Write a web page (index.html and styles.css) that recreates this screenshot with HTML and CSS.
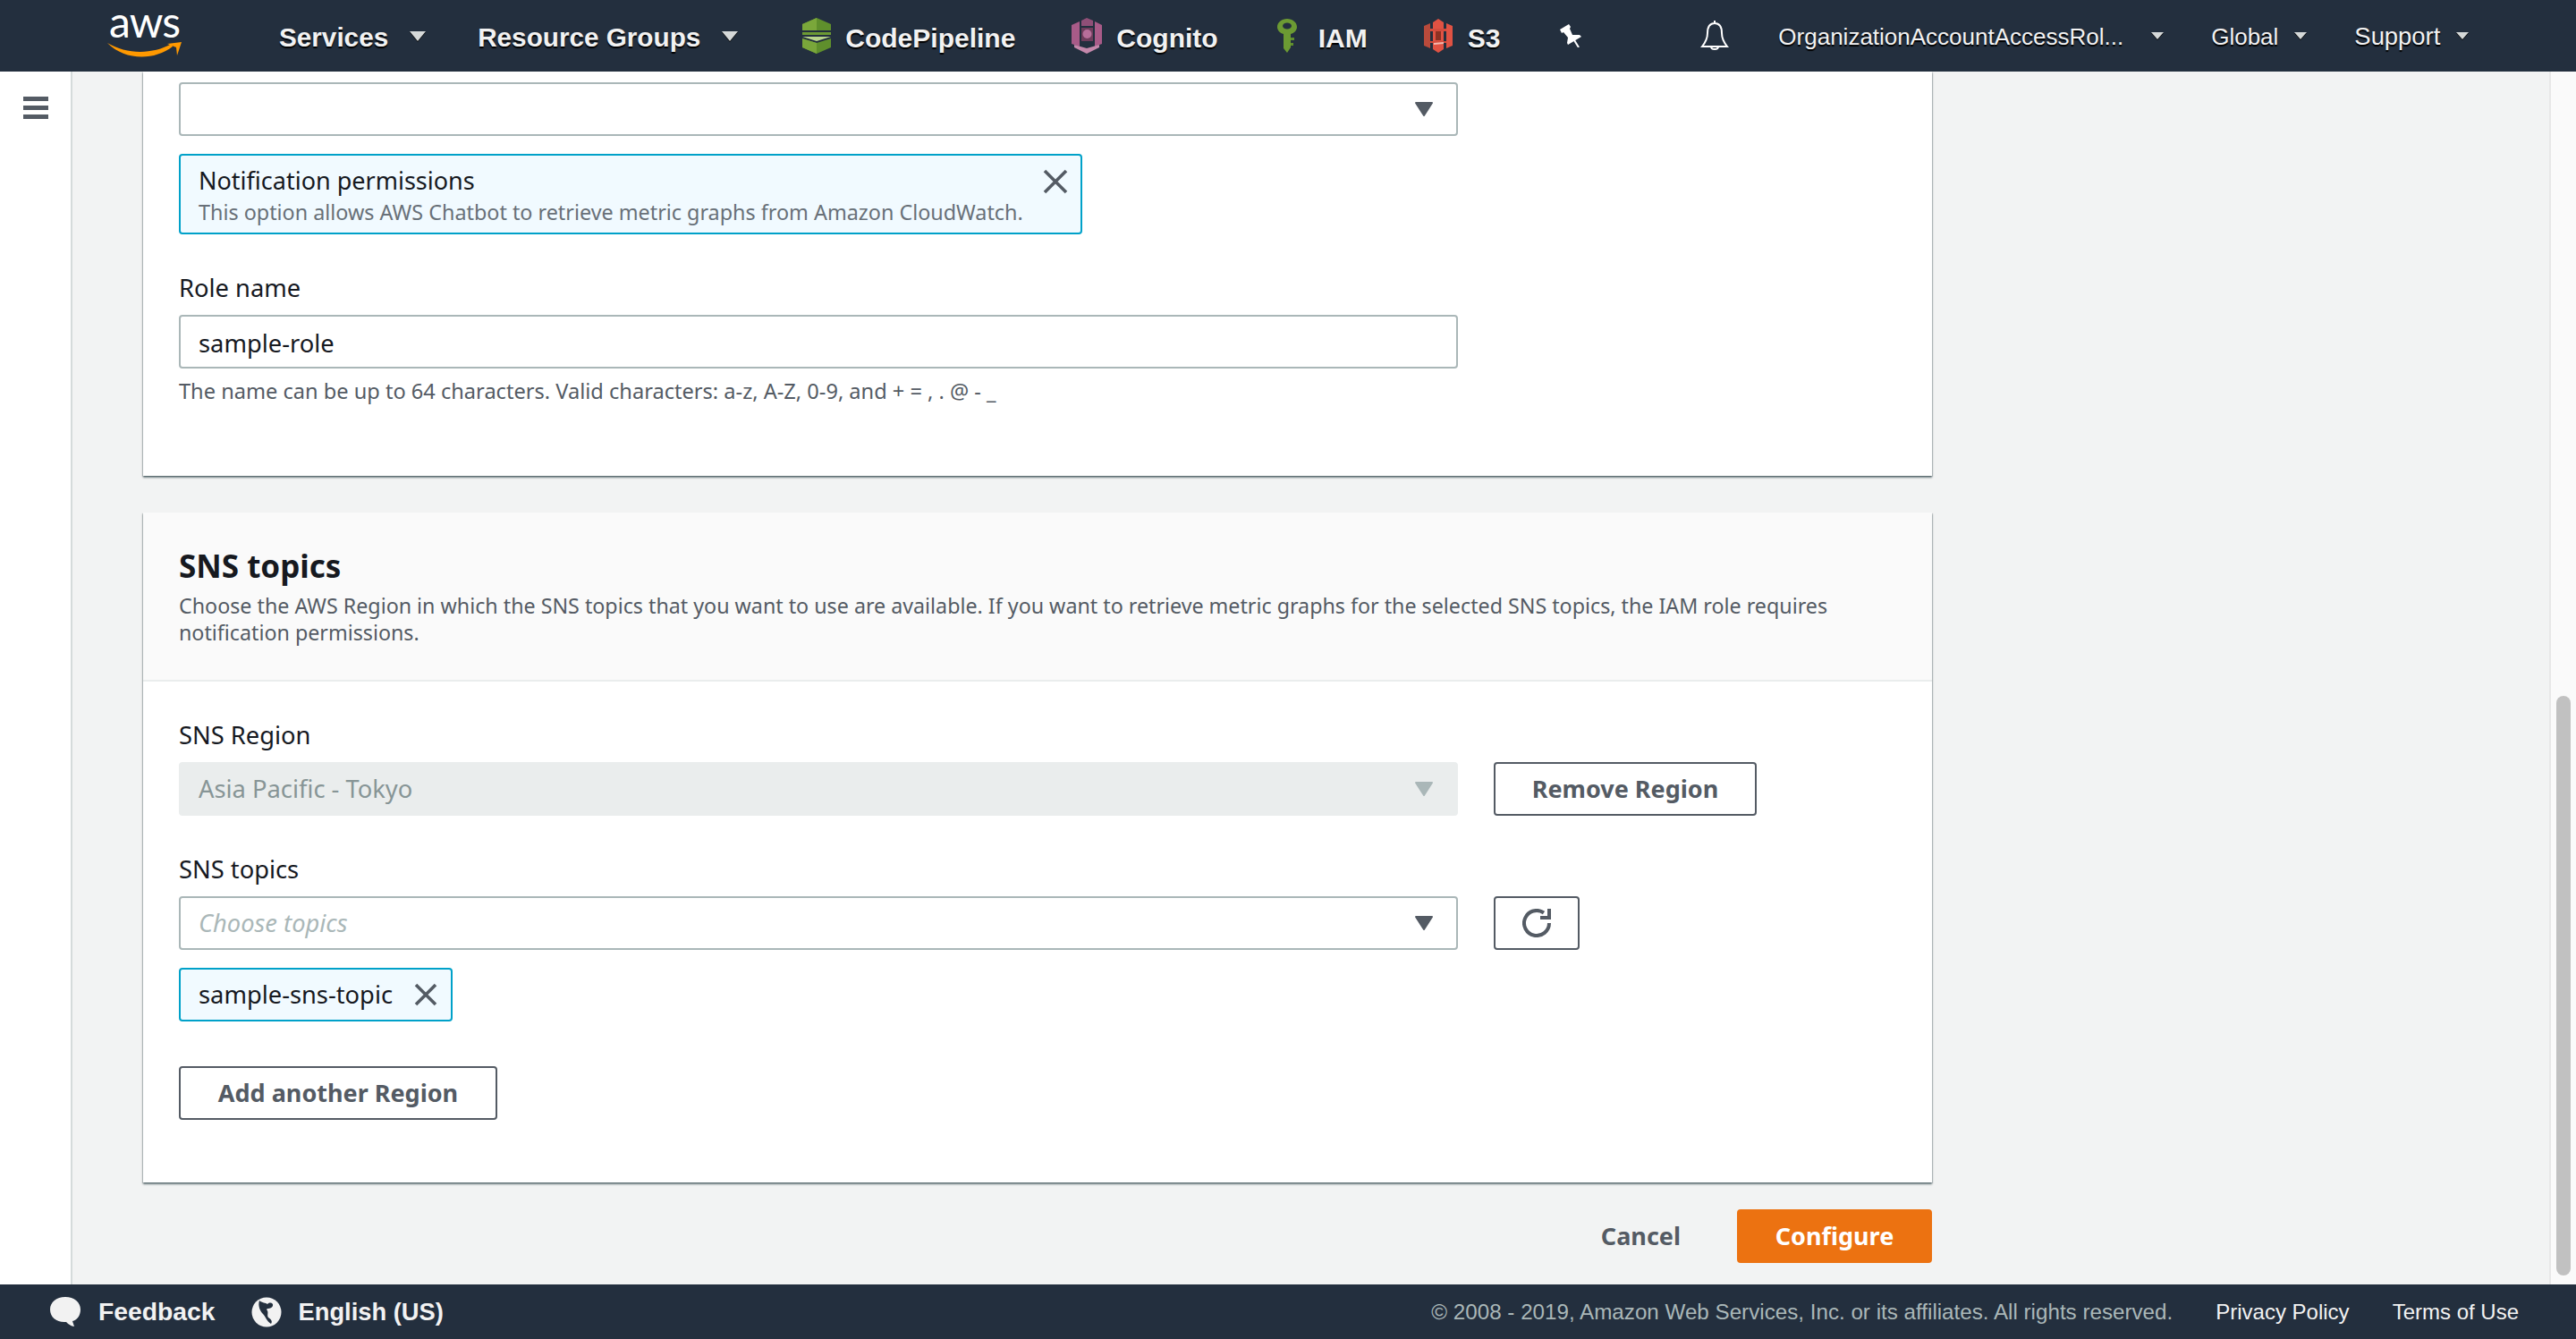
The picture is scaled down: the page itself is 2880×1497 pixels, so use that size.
FILE: index.html
```html
<!DOCTYPE html>
<html lang="en">
<head>
<meta charset="utf-8">
<title>AWS Chatbot - Configure</title>
<link rel="stylesheet" href="styles.css">
</head>
<body>
<header class="topbar">
  <a class="logo">
    <span class="logo-word">aws</span>
    <svg class="logo-smile" width="84" height="18" viewBox="0 0 84 18"><path d="M0 2C22 15 50 15 72 3L73 6C52 22 20 22 0 2Z" fill="#f90"/><path d="M67 3L83 1L78 16L77 7Z" fill="#f90"/></svg>
  </a>
  <span class="nav-item nav-services">Services</span><span class="caret caret-services"></span>
  <span class="nav-item nav-groups">Resource Groups</span><span class="caret caret-groups"></span>
  <svg class="shortcut-icon icon-pipeline" width="32" height="40" viewBox="0 0 32 40">
    <path d="M16 0L32 7V14H0V7Z" fill="#5f8f2c"/><path d="M7 4L16 0V14H0V7Z" fill="#7aa73a"/>
    <path d="M0 16H32V19H0Z" fill="#6c9a33"/><path d="M0 21H32L16 26Z" fill="#b7d48a"/>
    <path d="M0 23L16 28L32 23V33L16 40L0 33Z" fill="#5f8f2c"/><path d="M0 23L16 28V40L0 33Z" fill="#79a63a"/>
  </svg>
  <span class="nav-item short nav-pipeline">CodePipeline</span>
  <svg class="shortcut-icon icon-cognito" width="34" height="40" viewBox="0 0 34 40">
    <path d="M0 8L9 4V32L0 29Z" fill="#a85b88"/><path d="M34 8L26 4V32L34 29Z" fill="#a85b88"/>
    <path d="M11 3L17 0L24 3V9H11Z" fill="#8f4f77"/><path d="M11 11H24V26H11Z" fill="#6f3d5c"/>
    <circle cx="17.500" cy="18" r="5" fill="#b76e9a"/><path d="M3 30L17 34L31 30V33L17 40L3 33Z" fill="#c488ab"/>
  </svg>
  <span class="nav-item short nav-cognito">Cognito</span>
  <svg class="shortcut-icon icon-iam" width="22" height="38" viewBox="0 0 22 38">
    <path d="M11 0C17 0 22 4 22 9C22 13 19 16 15 17V32L11 38L7 33V17C3 16 0 13 0 9C0 4 5 0 11 0Z" fill="#6c9a33"/>
    <ellipse cx="11" cy="8" rx="5" ry="3.500" fill="#232f3e"/><path d="M15 21H19V24H15ZM15 27H18V30H15Z" fill="#5f8f2c"/>
  </svg>
  <span class="nav-item short nav-iam">IAM</span>
  <svg class="shortcut-icon icon-s3" width="32" height="38" viewBox="0 0 32 38">
    <path d="M16 0L22 4V34L16 38L10 34V4Z" fill="#e05243"/><path d="M0 8L7 5V33L0 30Z" fill="#b94a3b"/><path d="M32 8L25 5V33L32 30Z" fill="#e05243"/>
    <path d="M7 11L25 11V14L7 14ZM7 25H25V27H7Z" fill="#d34c3d"/><path d="M13 14H19V24H13Z" fill="#8c3123"/><path d="M11 27L22 26V28L11 29Z" fill="#f3b8ae"/>
  </svg>
  <span class="nav-item short nav-s3">S3</span>
  <svg class="pin" width="24" height="26" viewBox="0 0 24 26"><path d="M0 6L10 0L12 3L11 5L14 12L22 12L24 14L9 23L8 21L9 15L4 9L2 10Z" fill="#fff"/><path d="M16 18L21 26" stroke="#fff" stroke-width="2"/></svg>
  <svg class="bell" width="32" height="36" viewBox="0 0 32 36"><path d="M16 1V4M16 4C9 4 8 10 8 15C8 21 6 25 2 30H30C26 25 24 21 24 15C24 10 23 4 16 4ZM12 30C12 34 20 34 20 30" fill="none" stroke="#fff" stroke-width="2"/></svg>
  <span class="util util-role">OrganizationAccountAccessRol...</span><span class="caret small caret-role"></span>
  <span class="util util-global">Global</span><span class="caret small caret-util"></span>
  <span class="util util-support">Support</span><span class="caret small caret-util"></span>
</header>

<div class="shell">
  <aside class="sidebar">
    <div class="burger"><i></i><i></i><i></i></div>
  </aside>
  <main class="content">
    <div class="column">
      <section class="card card-first">
        <div class="card-body first-body">
          <div class="select"><svg class="tri" width="22" height="17" viewBox="0 0 22 17"><path d="M2 1H20L11 15Z" fill="#545b64" stroke="#545b64" stroke-width="2" stroke-linejoin="round"/></svg></div>
          <div class="token token-wide">
            <div class="token-text">
              <div class="token-title">Notification permissions</div>
              <div class="token-desc">This option allows AWS Chatbot to retrieve metric graphs from Amazon CloudWatch.</div>
            </div>
            <svg class="x-large" width="28" height="28" viewBox="0 0 28 28"><path d="M2 2L26 26M26 2L2 26" stroke="#545b64" stroke-width="3.600"/></svg>
          </div>
          <label class="label role-label">Role name</label>
          <div class="input">sample-role</div>
          <p class="hint">The name can be up to 64 characters. Valid characters: a-z, A-Z, 0-9, and + = , . @ - _</p>
        </div>
      </section>

      <section class="card card-second">
        <div class="card-head">
          <h2 class="card-title">SNS topics</h2>
          <p class="card-desc">Choose the AWS Region in which the SNS topics that you want to use are available. If you want to retrieve metric graphs for the selected SNS topics, the IAM role requires notification permissions.</p>
        </div>
        <div class="card-body second-body">
          <label class="label">SNS Region</label>
          <div class="row">
            <div class="select disabled">Asia Pacific - Tokyo<svg class="tri" width="22" height="17" viewBox="0 0 22 17"><path d="M2 1H20L11 15Z" fill="#aab7b8" stroke="#aab7b8" stroke-width="2" stroke-linejoin="round"/></svg></div>
            <button class="btn btn-remove">Remove Region</button>
          </div>
          <label class="label label-gap">SNS topics</label>
          <div class="row">
            <div class="select placeholder">Choose topics<svg class="tri" width="22" height="17" viewBox="0 0 22 17"><path d="M2 1H20L11 15Z" fill="#545b64" stroke="#545b64" stroke-width="2" stroke-linejoin="round"/></svg></div>
            <button class="btn btn-refresh"><svg width="32" height="32" viewBox="0 0 32 32"><path d="M24 4.500A14 14 0 1 0 30 16" fill="none" stroke="#545b64" stroke-width="4"/><path d="M32 0V12H20V8H28V0Z" fill="#545b64"/></svg></button>
          </div>
          <div class="token token-chip">
            <span class="chip-text">sample-sns-topic</span>
            <svg class="chip-x" width="26" height="26" viewBox="0 0 26 26"><path d="M2 2L24 24M24 2L2 24" stroke="#545b64" stroke-width="3.600"/></svg>
          </div>
          <button class="btn btn-add">Add another Region</button>
        </div>
      </section>

      <div class="actions">
        <button class="link-btn">Cancel</button>
        <button class="btn-primary">Configure</button>
      </div>
    </div>
  </main>
  <div class="scrolltrack"><div class="thumb"></div></div>
</div>

<footer class="footer">
  <svg class="foot-icon feedback-icon" width="34" height="34" viewBox="0 0 34 34"><path d="M17 0C27 0 34 6 34 14C34 21 30 26 25 27L27 33C24 33 20 30 18 28C8 29 0 23 0 14C0 6 7 0 17 0Z" fill="#f2f2f2"/></svg>
  <span class="foot-strong foot-feedback">Feedback</span>
  <svg class="foot-icon globe-icon" width="34" height="34" viewBox="0 0 34 34"><circle cx="17" cy="17" r="16.500" fill="#f2f2f2"/><path d="M9 4C12 7 16 6 18 8C21 5 25 7 24 10C22 14 18 12 17 14C20 17 17 20 19 23C22 25 24 27 22 30C17 27 16 22 13 19C10 16 7 10 9 4Z" fill="#232f3e"/></svg>
  <span class="foot-strong foot-lang">English (US)</span>
  <span class="copyright">© 2008 - 2019, Amazon Web Services, Inc. or its affiliates. All rights reserved.</span>
  <span class="foot-link foot-privacy">Privacy Policy</span>
  <span class="foot-link foot-terms">Terms of Use</span>
</footer>
</body>
</html>
```
FILE: styles.css
```css
* { box-sizing: border-box; }
html, body { margin: 0; padding: 0; }
body {
  width: 2880px;
  height: 1497px;
  display: flex;
  flex-direction: column;
  overflow: hidden;
  background: #232f3e;
  font-family: "Noto Sans", sans-serif;
  color: #16191f;
}

/* top bar */
.topbar {
  height: 80px;
  flex: none;
  display: flex;
  align-items: center;
  background: #232f3e;
  font-family: "Liberation Sans", sans-serif;
  color: #f2f2f2;
}
.logo { position: relative; width: 84px; height: 60px; margin-left: 120px; display: block; }
.logo-word { position: absolute; left: 2px; top: -16px; font: 400 48px/60px Lato, sans-serif; color: #fff; letter-spacing: -1px; }
.logo-smile { position: absolute; left: 0; top: 36px; }
.nav-item { font-size: 29.700px; font-weight: 700; line-height: 40px; padding-top: 3px; text-shadow: 0 2px 1px #000; white-space: nowrap; }
.short { padding-top: 6px; font-size: 30px; }
.nav-services { margin-left: 108px; }
.nav-groups { margin-left: 58px; }
.caret { flex: none; width: 0; height: 0; border-left: 9px solid transparent; border-right: 9px solid transparent; border-top: 11px solid #d5d9d9; filter: drop-shadow(0 1px 0 #000); }
.caret.small { border-left-width: 7px; border-right-width: 7px; border-top-width: 8px; }
.caret-services { margin-left: 24px; }
.caret-groups { margin-left: 24px; }
.shortcut-icon { flex: none; }
.icon-pipeline { margin-left: 72px; }
.nav-pipeline { margin-left: 16px; }
.icon-cognito { margin-left: 63px; }
.nav-cognito { margin-left: 16px; }
.icon-iam { margin-left: 66px; }
.nav-iam { margin-left: 24px; }
.icon-s3 { margin-left: 63px; }
.nav-s3 { margin-left: 17px; }
.pin { margin-left: 67px; flex: none; }
.bell { margin-left: 133px; flex: none; }
.util { font-size: 26px; padding-top: 2px; text-shadow: 0 2px 1px #000; white-space: nowrap; }
.util-role { margin-left: 55px; }
.caret-role { margin-left: 31px; }
.util-global { margin-left: 53px; }
.util-support { margin-left: 53px; font-size: 27.400px; }
.caret-util { margin-left: 18px; }

/* shell */
.shell { flex: 1; min-height: 0; display: flex; background: #f2f3f3; }
.sidebar { width: 81px; flex: none; background: #fff; border-right: 2px solid #d5dbdb; padding: 28px 0 0 26px; }
.burger { width: 28px; display: flex; flex-direction: column; gap: 5px; }
.burger i { display: block; height: 5px; background: #545b64; }
.content { flex: 1; min-width: 0; padding-left: 79px; }
.column { width: 2000px; }
.scrolltrack { width: 30px; flex: none; background: #fafafa; border-left: 2px solid #e8e8e8; padding: 0 6px 10px; display: flex; flex-direction: column; justify-content: flex-end; }
.thumb { height: 648px; border-radius: 8px; background: #c1c1c1; }

/* cards */
.card { background: #fff; box-shadow: 0 2px 2px rgba(0, 28, 36, .5), 1px 1px 1px rgba(0, 28, 36, .15), -1px 1px 1px rgba(0, 28, 36, .15); }
.card-body { padding: 0 40px; }
.first-body { padding-top: 12px; padding-bottom: 80px; }
.card-second { margin-top: 41px; }
.second-body { padding-top: 45px; padding-bottom: 70px; }
.card-head { background: #fafafa; border-bottom: 2px solid #eaeded; padding: 38px 40px; }
.card-title { margin: 0; font-size: 35px; line-height: 44px; font-weight: 700; }
.card-desc { margin: 7px 0 0; font-size: 23.250px; line-height: 30px; color: #545b64; }

.label { display: block; font-size: 27.300px; line-height: 29px; margin-bottom: 16px; }
.role-label { margin-top: 45px; }
.label-gap { margin-top: 45px; }
.row { display: flex; gap: 40px; }

.select, .input {
  width: 1430px;
  height: 60px;
  flex: none;
  border: 2px solid #aab7b8;
  border-radius: 4px;
  background: #fff;
  padding: 0 20px;
  display: flex;
  align-items: center;
  font-size: 27.300px;
}
.input { padding-top: 2px; }
.select { justify-content: space-between; padding-right: 25px; padding-bottom: 2px; }
.select.disabled { background: #eaeded; border-color: #eaeded; color: #879596; }
.select.placeholder { font-style: italic; color: #aab7b8; }
.tri { flex: none; margin: 2px 0 0 auto; }

.token { border: 2px solid #00a1c9; border-radius: 4px; background: #f1faff; display: flex; }
.token-wide { width: 1010px; height: 90px; margin-top: 20px; padding: 11px 14px 0 20px; justify-content: space-between; }
.token-title { font-size: 27px; line-height: 34px; }
.token-desc { font-size: 23.350px; line-height: 36px; color: #687078; white-space: nowrap; }
.x-large { margin-top: 4px; }
.token-chip { width: 306px; height: 60px; margin-top: 20px; padding: 0 15px 2px 20px; align-items: center; justify-content: space-between; }
.chip-text { font-size: 27.300px; }
.chip-x { margin-top: 2px; }

.hint { margin: 10px 0 0; font-size: 23.600px; line-height: 30px; color: #545b64; }

.btn { height: 60px; flex: none; border: 2px solid #545b64; border-radius: 4px; background: #fff; color: #545b64; font: 700 27px "Noto Sans", sans-serif; padding: 0 0 2px; display: flex; align-items: center; justify-content: center; }
.btn-remove { width: 294px; }
.btn-refresh { width: 96px; padding: 0; }
.btn-add { width: 356px; margin-top: 50px; }

.actions { margin-top: 30px; display: flex; justify-content: flex-end; align-items: center; }
.link-btn { border: 0; background: none; padding: 0 0 2px; font: 700 27px "Noto Sans", sans-serif; color: #545b64; margin-right: 63px; }
.btn-primary { width: 218px; height: 60px; border: 0; border-radius: 4px; background: #ec7211; color: #fff; padding: 0 0 2px; font: 700 27px "Noto Sans", sans-serif; }

/* footer */
.footer { height: 61px; flex: none; display: flex; align-items: center; background: #232f3e; font-family: "Liberation Sans", sans-serif; }
.foot-icon { flex: none; }
.feedback-icon { margin-left: 56px; }
.foot-strong { font-size: 28.300px; font-weight: 700; color: #f2f2f2; }
.foot-feedback { margin-left: 20px; }
.globe-icon { margin-left: 40px; }
.foot-lang { margin-left: 19px; font-size: 27.300px; }
.copyright { margin-left: auto; font-size: 24.200px; color: #aab7b8; }
.foot-link { font-size: 24px; color: #f2f2f2; }
.foot-privacy { margin-left: 48px; }
.foot-terms { margin-left: 48px; margin-right: 64px; }
```
